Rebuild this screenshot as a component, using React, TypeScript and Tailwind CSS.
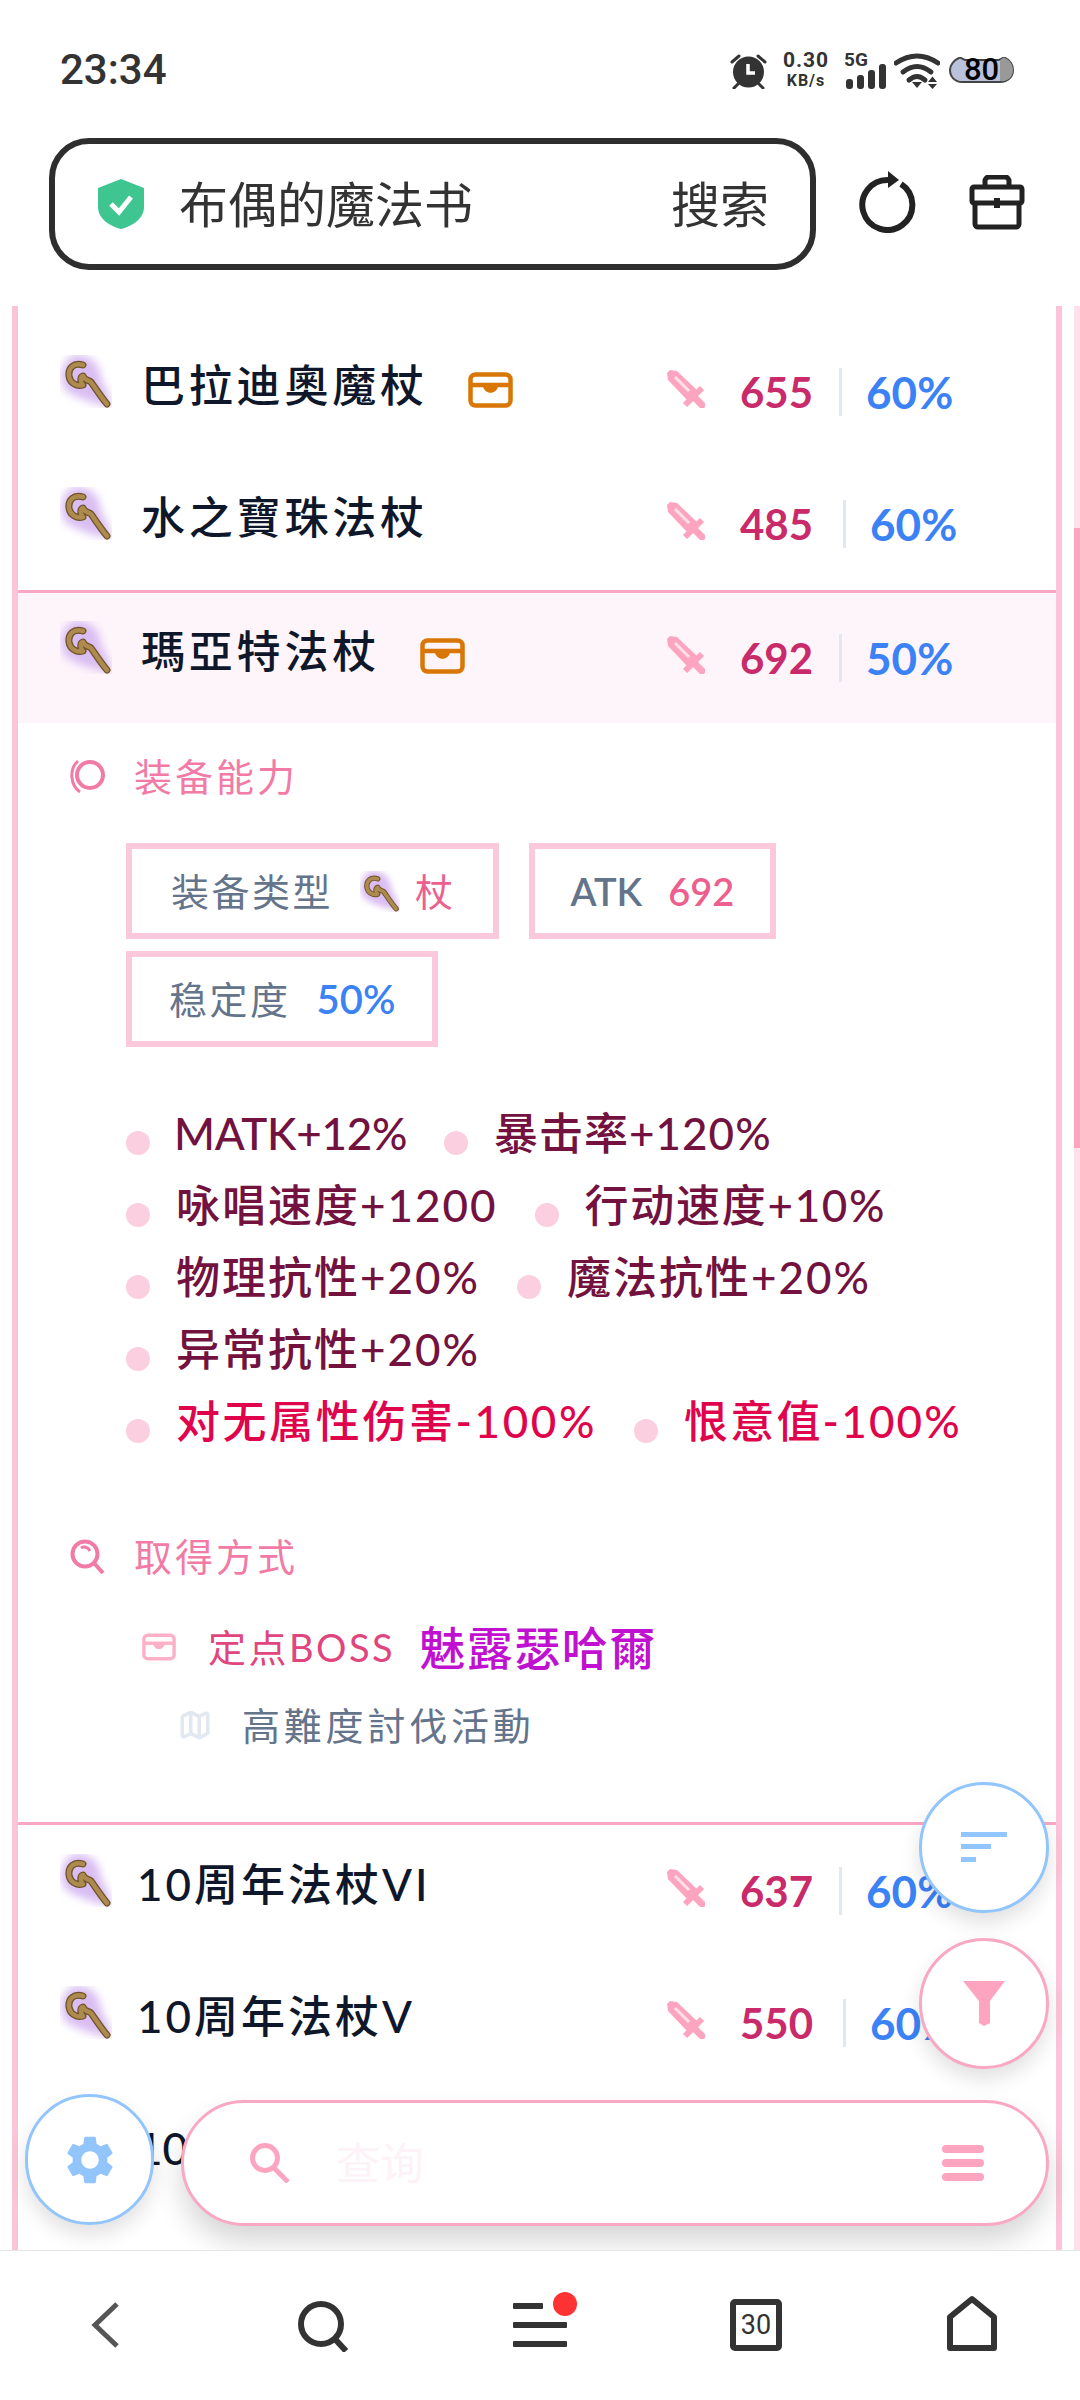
import React from "react";
import { Map as MapIcon } from "lucide-react";
import { MdSettings } from "react-icons/md";

const fontStack = { fontFamily: '"Lato", "Noto Sans CJK SC", "Noto Sans", sans-serif' };

function Wand({ className }: { className: string }) {
  const staff = "M23 10 C14 7 8 13 9 21 C10 28 17 32 23 30 C20 27 20 22 23 21 C25 26 29 25 31 27 C36 34 41 42 47 49";
  return (
    <svg viewBox="0 0 52 53" className={className}>
      <defs>
        <filter id="wand-glow" x="-40%" y="-40%" width="180%" height="180%">
          <feGaussianBlur stdDeviation="4" />
        </filter>
      </defs>
      <path d="M14 0 C28 -2 40 8 40 20 C42 28 50 38 52 52 C38 50 18 44 6 36 C-2 26 0 6 14 0Z" fill="#d9bdf3" filter="url(#wand-glow)" />
      <path d={staff} fill="none" stroke="#6f5227" strokeWidth="7" strokeLinecap="round" strokeLinejoin="round" />
      <path d={staff} fill="none" stroke="#ad8a4e" strokeWidth="4.5" strokeLinecap="round" strokeLinejoin="round" />
    </svg>
  );
}

function Sword() {
  return (
    <svg viewBox="0 0 38 38" className="w-[38px] h-[38px] shrink-0 mb-[6px]">
      <polygon points="0,3 3,0 10,1 31,21 21,31 1,10" fill="#fda4c0" />
      <line x1="8" y1="7" x2="24" y2="23" stroke="#ffe0ea" strokeWidth="3" />
      <line x1="18" y1="35" x2="35" y2="18" stroke="#fda4c0" strokeWidth="6" />
      <line x1="24" y1="24" x2="35" y2="35" stroke="#fda4c0" strokeWidth="7" strokeLinecap="round" />
    </svg>
  );
}

function Chest({ color, className }: { color: string; className: string }) {
  return (
    <svg viewBox="0 0 45 36" className={className} fill="none" stroke={color} strokeWidth="4.5">
      <rect x="2.5" y="2.5" width="40" height="31" rx="5" />
      <path d="M2 13 H43" />
      <path d="M15 14 C16 23 29 23 30 14Z" fill={color} stroke="none" />
    </svg>
  );
}

type Item = {
  name: string;
  nameClass?: string;
  atk?: number;
  pct?: string;
  chest?: boolean;
  open?: boolean;
  wideAtk?: boolean;
};

function ItemRow({ name, nameClass = "ml-[29px] tracking-[3.8px]", atk, pct, chest, open, wideAtk }: Item) {
  return (
    <div className={`flex items-center pl-[42px] ${open ? "h-[130px] bg-[#fef5fa]" : "h-[132px]"}`}>
      <Wand className="w-[52px] h-[53px] shrink-0 mb-[22px]" />
      <span className={`mb-[14px] text-[44px] font-medium leading-[60px] text-[#0f172a] whitespace-nowrap ${nameClass}`}>{name}</span>
      {chest && <Chest color="#d97706" className="w-[45px] h-[36px] ml-[40px] mb-[4px]" />}
      {atk !== undefined && (
        <div className="ml-auto w-[389px] flex items-center shrink-0">
          <Sword />
          <span className={`ml-[35px] text-[42px] font-bold leading-[48px] text-[#c92a6a] ${wideAtk ? "pr-[4px]" : ""}`}>{atk}</span>
          <span className="ml-[26px] w-[3px] h-[48px] bg-[#e2e8f0]" />
          <span className="ml-[24px] text-[44px] font-bold leading-[48px] text-[#3b82f6]">{pct}</span>
        </div>
      )}
    </div>
  );
}

function Bullet({ text, red, className = "ml-[26px] tracking-[2px]" }: { text: string; red?: boolean; className?: string }) {
  return (
    <div className="flex items-center h-[72px]">
      <span className="w-[24px] h-[24px] rounded-full bg-[#fbcfe0] mt-[20px] shrink-0" />
      <span className={`text-[44px] font-medium leading-[60px] whitespace-nowrap ${red ? "text-[#e0044c]" : "text-[#73123f]"} ${className}`}>{text}</span>
    </div>
  );
}

function StatusBar() {
  return (
    <div className="h-[138px] flex items-start pt-[46px] pl-[60px] pr-[65px]">
      <span className="text-[42px] leading-[48px] font-medium text-[#333]" style={{ fontFamily: "Roboto, sans-serif" }}>23:34</span>
      <div className="ml-auto flex items-start pt-[7px] text-[#333]" style={{ fontFamily: 'Roboto, sans-serif' }}>
        <svg viewBox="0 0 37 36" className="w-[37px] h-[36px]" stroke="#333" fill="none" strokeWidth="3" strokeLinecap="round">
          <circle cx="18.5" cy="19" r="14" fill="#333" />
          <path d="M18 11 V20 H25" stroke="#fff" strokeWidth="3.5" strokeLinecap="butt" />
          <path d="M2 9 L9 3 M35 9 L28 3 M8 31 L4 35 M29 31 L33 35" />
        </svg>
        <div className="ml-[16px] w-[46px] mt-[-4px] flex flex-col items-center font-bold">
          <span className="text-[21px] leading-[22px] tracking-[1px]">0.30</span>
          <span className="text-[16px] leading-[20px] tracking-[1px]">KB/s</span>
        </div>
        <div className="ml-[15px] w-[42px] flex flex-col">
          <span className="text-[19px] leading-[14px] font-bold">5G</span>
          <svg viewBox="0 0 40 25" className="w-[40px] h-[25px] mt-[-3px] ml-[2px]" fill="#333">
            <rect x="0" y="15" width="7" height="10" rx="3" />
            <rect x="11" y="11" width="7" height="14" rx="3" />
            <rect x="22" y="6" width="7" height="19" rx="3" />
            <rect x="33" y="0" width="7" height="25" rx="3" />
          </svg>
        </div>
        <svg viewBox="0 0 46 37" className="w-[46px] h-[37px] ml-[8px]" fill="none" stroke="#333" strokeWidth="5" strokeLinecap="round">
          <path d="M2 10 Q23 -4 44 10" />
          <path d="M9 19 Q23 8 37 19" />
          <path d="M15 27 Q23 20 31 27" />
          <polygon points="18,29 28,29 23,35" fill="#333" stroke="none" />
          <polygon points="34,29 43,29 38.5,23.5" fill="#333" stroke="none" />
          <polygon points="34,31 43,31 38.5,36" fill="#333" stroke="none" />
        </svg>
        <div className="relative w-[67px] h-[26px] ml-[8px] mt-[4px] flex items-center justify-center">
          <svg viewBox="0 0 67 26" className="absolute inset-0 w-[67px] h-[26px]">
            <path d="M2 13 C2 8 6 3 11 1 C14 0 15 3 18 3 H50 C53 3 54 0 57 1 C62 3 65 8 65 13 C65 20 60 25 52 25 H14 C7 25 2 20 2 13Z" fill="#b9c2da" stroke="#444" strokeWidth="2" />
            <path d="M52 3 C54 2 55 0 57 1 C62 3 65 8 65 13 C65 20 60 25 52 24Z" fill="#999" />
          </svg>
          <span className="relative text-[31px] leading-[26px] font-medium text-black">80</span>
        </div>
      </div>
    </div>
  );
}

function TopBar() {
  return (
    <div className="h-[168px] flex items-start pl-[49px]">
      <div className="w-[767px] h-[132px] border-[6px] border-[#2e2e2e] rounded-[40px] flex items-center pl-[43px] pr-[41px] text-[#333]">
        <svg viewBox="0 0 46 50" className="w-[46px] h-[50px] shrink-0">
          <path d="M23 0 L46 9 V28 C46 40 34 47 23 50 C12 47 0 40 0 28 V9Z" fill="#3fc590" />
          <path d="M13 25 L21 33 L33 18" fill="none" stroke="#fff" strokeWidth="5" />
        </svg>
        <span className="ml-[35px] text-[49px] leading-[60px]">布偶的魔法书</span>
        <span className="ml-auto text-[49px] leading-[60px]">搜索</span>
      </div>
      <svg viewBox="0 0 60 62" className="w-[60px] h-[62px] ml-[43px] mt-[33px]" fill="none" stroke="#222" strokeWidth="6">
        <path d="M42 13 A25 25 0 1 1 30 9" />
        <polygon points="29,0 40,9 29,17" fill="#222" stroke="none" />
      </svg>
      <svg viewBox="0 0 56 55" className="w-[56px] h-[55px] ml-[50px] mt-[37px]" fill="none" stroke="#222" strokeWidth="5">
        <path d="M16 12 V6 a4 4 0 0 1 4-4 h16 a4 4 0 0 1 4 4 v6" />
        <rect x="3" y="12" width="50" height="16" rx="2" />
        <path d="M6 28 V49 a3 3 0 0 0 3 3 H47 a3 3 0 0 0 3-3 V28" />
        <rect x="25" y="23" width="6" height="10" fill="#222" stroke="none" />
      </svg>
    </div>
  );
}

function Details() {
  return (
    <div className="pl-[52px] pt-[33px] pb-[78px] text-[38px]">
      <div className="flex items-center h-[40px] text-[#f27ba6] tracking-[3px]">
        <svg viewBox="0 0 36 34" className="w-[36px] h-[34px]" fill="none" stroke="#f27ba6" strokeWidth="4">
          <ellipse cx="20" cy="16" rx="13" ry="13" />
          <path d="M8 2 C-1 10 0 26 10 33" strokeWidth="3" />
        </svg>
        <span className="ml-[28px]">装备能力</span>
      </div>

      <div className="mt-[47px] ml-[56px] flex flex-wrap gap-x-[30px] gap-y-[12px]">
        <div className="h-[96px] border-[6px] border-[#fcc9dc] flex items-center pl-[39px] pr-[37px] text-[#64748b] tracking-[2.5px]">
          <span>装备类型</span>
          <Wand className="w-[40px] h-[41px] ml-[27px]" />
          <span className="ml-[15px] text-[#ec5f8f]">杖</span>
        </div>
        <div className="h-[96px] border-[6px] border-[#fcc9dc] flex items-center px-[36px] text-[38px] font-semibold text-[#64748b]">
          <span>ATK</span>
          <span className="ml-[26px] text-[#ec5f8f]">692</span>
        </div>
        <div className="h-[96px] border-[6px] border-[#fcc9dc] flex items-center px-[37px] text-[#64748b] tracking-[2.5px]">
          <span>稳定度</span>
          <span className="ml-[26px] text-[40px] font-semibold tracking-normal text-[#3b82f6]">50%</span>
        </div>
      </div>

      <div className="mt-[50px] ml-[56px] w-[850px] flex flex-wrap gap-x-[37px]">
        <Bullet text="MATK+12%" className="ml-[24px] tracking-[-0.3px]" />
        <Bullet text="暴击率+120%" className="ml-[26px] tracking-[1px]" />
        <Bullet text="咏唱速度+1200" />
        <Bullet text="行动速度+10%" className="ml-[26px] tracking-[1.7px]" />
        <Bullet text="物理抗性+20%" />
        <Bullet text="魔法抗性+20%" />
        <Bullet text="异常抗性+20%" />
        <Bullet text="对无属性伤害-100%" red className="ml-[26px] tracking-[2.6px]" />
        <Bullet text="恨意值-100%" red className="ml-[26px] tracking-[2.2px]" />
      </div>

      <div className="mt-[79px] flex items-center h-[40px] text-[#f27ba6] tracking-[3px]">
        <svg viewBox="0 0 36 36" className="w-[36px] h-[36px]" fill="none" stroke="#f27ba6" strokeWidth="4">
          <circle cx="15" cy="16" r="12.5" />
          <path d="M24 25 L33 35" />
          <path d="M11 10 C14 8 18 9 20 13" strokeWidth="3" />
        </svg>
        <span className="ml-[28px]">取得方式</span>
      </div>

      <div className="mt-[50px] ml-[72px] flex items-center h-[42px]">
        <Chest color="#fdb0c8" className="w-[34px] h-[28px]" />
        <span className="ml-[32px] text-[38px] tracking-[2.5px] text-[#e0457e]">定点BOSS</span>
        <span className="ml-[24px] text-[46px] font-medium tracking-[1.5px] text-[#c011d0]">魅露瑟哈爾</span>
      </div>
      <div className="mt-[38px] ml-[108px] flex items-center h-[38px]">
        <MapIcon className="w-[34px] h-[34px] text-[#e2e8f0]" strokeWidth={2.5} />
        <span className="ml-[30px] tracking-[3.8px] text-[#64748b]">高難度討伐活動</span>
      </div>
    </div>
  );
}

function FloatingControls() {
  return (
    <>
      <div className="absolute left-[919px] top-[1476px] w-[130px] h-[131px] rounded-full bg-white border-[3px] border-[#93c5fd] shadow-[0_10px_20px_rgba(0,0,0,0.12)] flex items-center justify-center">
        <svg viewBox="0 0 46 30" className="w-[46px] h-[30px] mt-[-2px]" fill="#93c5fd">
          <rect x="0" y="0" width="46" height="5" />
          <rect x="0" y="12" width="30" height="5" />
          <rect x="0" y="25" width="15" height="5" />
        </svg>
      </div>
      <div className="absolute left-[919px] top-[1632px] w-[130px] h-[131px] rounded-full bg-white border-[3px] border-[#f9a8c4] shadow-[0_10px_20px_rgba(0,0,0,0.12)] flex items-center justify-center">
        <svg viewBox="0 0 42 45" className="w-[42px] h-[45px]" fill="#fda4c0">
          <polygon points="0,0 42,0 27,20 27,42 21,45 16,42 16,20" />
        </svg>
      </div>
      <div className="absolute left-[25px] top-[1788px] w-[129px] h-[131px] rounded-full bg-white border-[3px] border-[#93c5fd] shadow-[0_10px_20px_rgba(0,0,0,0.12)] flex items-center justify-center z-10">
        <MdSettings className="w-[58px] h-[58px] text-[#93c5fd]" />
      </div>
      <div className="absolute left-[181px] top-[1794px] w-[868px] h-[126px] rounded-[63px] bg-white border-[3px] border-[#f9a8c4] shadow-[0_16px_28px_rgba(0,0,0,0.16)] flex items-center pl-[66px] pr-[62px]">
        <svg viewBox="0 0 40 40" className="w-[40px] h-[40px]" fill="none" stroke="#fda4c0" strokeWidth="5">
          <circle cx="15" cy="15" r="12.5" />
          <path d="M24 25 L38 39" />
        </svg>
        <span className="ml-[46px] text-[44px] text-[#fdf2f8]">查询</span>
        <div className="ml-auto flex flex-col gap-[6px]">
          <span className="w-[42px] h-[8px] rounded-full bg-[#fda4c0]" />
          <span className="w-[42px] h-[8px] rounded-full bg-[#fda4c0]" />
          <span className="w-[42px] h-[8px] rounded-full bg-[#fda4c0]" />
        </div>
      </div>
    </>
  );
}

function BottomNav() {
  return (
    <div className="relative h-[150px] bg-white border-t border-[#e5e5e5] grid grid-cols-5 items-start pt-[41px]">
      <div className="flex justify-center pr-[6px] pt-[10px]">
        <svg viewBox="0 0 28 46" className="w-[28px] h-[46px]" fill="none" stroke="#555" strokeWidth="5">
          <path d="M26 2 L4 23 L26 44" />
        </svg>
      </div>
      <div className="flex justify-center pt-[8px]">
        <svg viewBox="0 0 52 52" className="w-[52px] h-[52px]" fill="none" stroke="#333" strokeWidth="6">
          <circle cx="23" cy="24" r="20" />
          <path d="M36 38 L48 51" />
        </svg>
      </div>
      <div className="flex justify-center">
        <svg viewBox="0 0 64 56" className="w-[64px] h-[56px] ml-[9px]" fill="#333">
          <rect x="0" y="11" width="30" height="6" rx="1" />
          <rect x="0" y="30" width="54" height="6" rx="1" />
          <rect x="0" y="49" width="54" height="6" rx="1" />
          <circle cx="52" cy="12" r="12" fill="#ff3333" />
        </svg>
      </div>
      <div className="flex justify-center pt-[7px]">
        <div className="w-[52px] h-[52px] border-[6px] border-[#333] rounded-[5px] flex items-center justify-center text-[27px] leading-none text-[#333]" style={{ fontFamily: "Roboto, sans-serif" }}>30</div>
      </div>
      <div className="flex justify-center pt-[3px]">
        <svg viewBox="0 0 54 56" className="w-[54px] h-[56px]" fill="none" stroke="#333" strokeWidth="6" strokeLinejoin="round">
          <path d="M27 4 L49 22 V53 H5 V22Z" />
        </svg>
      </div>
    </div>
  );
}

export default function App() {
  return (
    <div className="w-[1080px] h-[2400px] bg-white flex flex-col overflow-hidden" style={fontStack}>
      <StatusBar />
      <TopBar />
      <div className="relative flex-1 min-h-0 overflow-hidden">
        <div className="ml-[12px] w-[1050px] border-x-[6px] border-[#fcc4d8] pt-[20px] h-full">
          <ItemRow name="巴拉迪奧魔杖" atk={655} pct="60%" chest />
          <ItemRow name="水之寶珠法杖" atk={485} pct="60%" wideAtk />
          <div className="border-t-[3px] border-[#f9a8c4]">
            <ItemRow name="瑪亞特法杖" atk={692} pct="50%" chest open />
          </div>
          <Details />
          <div className="border-t-[3px] border-[#f9a8c4]">
            <ItemRow name="10周年法杖VI" nameClass="ml-[25px] tracking-[3px]" atk={637} pct="60%" />
          </div>
          <ItemRow name="10周年法杖V" nameClass="ml-[25px] tracking-[3px]" atk={550} pct="60%" wideAtk />
          <ItemRow name="10" nameClass="ml-[25px]" />
        </div>
        <div className="absolute right-0 top-0 bottom-0 w-[6px] bg-[#fde0ea]">
          <div className="mt-[222px] h-[620px] bg-[#fda4c0]" />
        </div>
        <FloatingControls />
      </div>
      <BottomNav />
    </div>
  );
}
